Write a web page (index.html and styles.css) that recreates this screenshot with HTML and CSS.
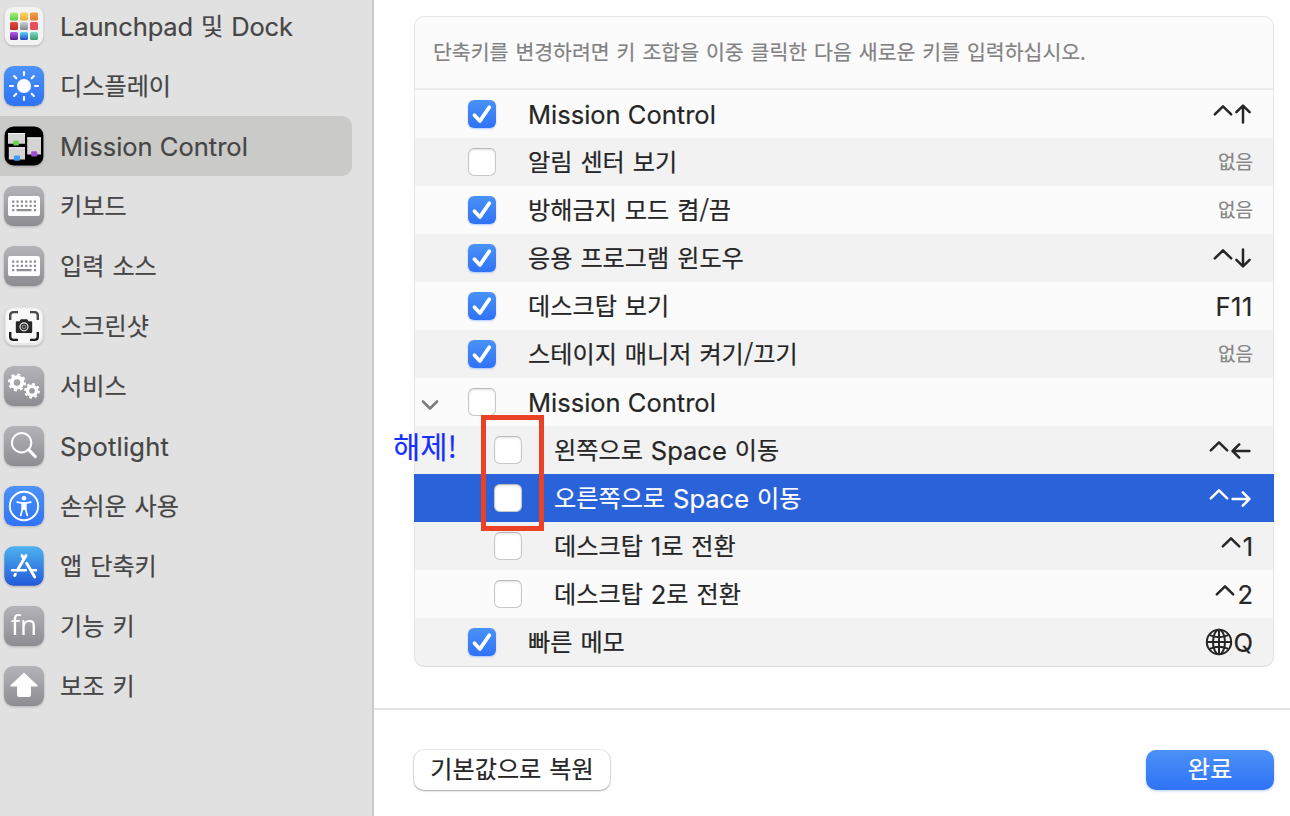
FILE: index.html
```
<!DOCTYPE html>
<html lang="ko">
<head>
  <meta charset="UTF-8">
  <title>키보드 단축키</title>
  <link rel="stylesheet" href="styles.css">
</head>
<body>
  <svg width="0" height="0" class="defs">
    <defs>
      <linearGradient id="g-blue" x1="0" y1="0" x2="0" y2="1"><stop offset="0" stop-color="#4b92f8"/><stop offset="1" stop-color="#2f73f6"/></linearGradient>
      <linearGradient id="g-gray" x1="0" y1="0" x2="0" y2="1"><stop offset="0" stop-color="#b3b3b8"/><stop offset="1" stop-color="#8c8c91"/></linearGradient>
      <linearGradient id="g-store" x1="0" y1="0" x2="0" y2="1"><stop offset="0" stop-color="#4db2ef"/><stop offset="1" stop-color="#2359d8"/></linearGradient>
      <linearGradient id="l1" x1="0" y1="0" x2="0" y2="1"><stop offset="0" stop-color="#a9f07a"/><stop offset="1" stop-color="#56cc4b"/></linearGradient>
      <linearGradient id="l2" x1="0" y1="0" x2="0" y2="1"><stop offset="0" stop-color="#f8d75c"/><stop offset="1" stop-color="#eeab3a"/></linearGradient>
      <linearGradient id="l3" x1="0" y1="0" x2="0" y2="1"><stop offset="0" stop-color="#f0a04a"/><stop offset="1" stop-color="#dd7b2b"/></linearGradient>
      <linearGradient id="l4" x1="0" y1="0" x2="0" y2="1"><stop offset="0" stop-color="#e74b40"/><stop offset="1" stop-color="#b92c24"/></linearGradient>
      <linearGradient id="l5" x1="0" y1="0" x2="0" y2="1"><stop offset="0" stop-color="#c9d3d6"/><stop offset="1" stop-color="#7f8688"/></linearGradient>
      <linearGradient id="l7" x1="0" y1="0" x2="0" y2="1"><stop offset="0" stop-color="#b75bea"/><stop offset="1" stop-color="#541a8c"/></linearGradient>
      <linearGradient id="l8" x1="0" y1="0" x2="0" y2="1"><stop offset="0" stop-color="#5bd3fa"/><stop offset="1" stop-color="#2046c4"/></linearGradient>
      <linearGradient id="l9" x1="0" y1="0" x2="0" y2="1"><stop offset="0" stop-color="#7fdcc8"/><stop offset="1" stop-color="#3d9a6c"/></linearGradient>
      <symbol id="keyboard" viewBox="0 0 40 40">
        <rect width="40" height="40" rx="9" fill="url(#g-gray)"/>
        <rect x="4" y="10" width="32" height="20" rx="2.6" fill="#fff"/>
        <path d="M8.1 15.6h24.2M8.1 19.9h24.2" stroke="#8e8e93" stroke-width="2.2" stroke-dasharray="2.2 2.15"/>
        <path d="M8.1 24.2h2.2M12.5 24.2h15M29.9 24.2h2.2" stroke="#8e8e93" stroke-width="2.2"/>
      </symbol>
      <symbol id="check" viewBox="0 0 28 28"><path d="M6.5 15.2 11.9 21 21.3 7.2" fill="none" stroke="#fff" stroke-width="3.8" stroke-linecap="round" stroke-linejoin="round"/></symbol>
      <symbol id="ctrl" viewBox="0 0 20 24"><path d="M1.8 12.4 10 4.4 18.2 12.4" fill="none" stroke="currentColor" stroke-width="2.5" stroke-linecap="round" stroke-linejoin="round"/></symbol>
      <symbol id="arrow-v" viewBox="0 0 16 20"><path d="M8 18.6V2M1.4 8.2 8 1.6 14.6 8.2" fill="none" stroke="currentColor" stroke-width="2.5" stroke-linecap="round" stroke-linejoin="round"/></symbol>
      <symbol id="arrow-h" viewBox="0 0 20 16"><path d="M18.4 8H2M8.2 1.4 1.6 8 8.2 14.6" fill="none" stroke="currentColor" stroke-width="2.5" stroke-linecap="round" stroke-linejoin="round"/></symbol>
    </defs>
  </svg>

  <div class="window">
    <nav class="sidebar">
      <div class="item">
        <svg class="icon" viewBox="0 0 40 40">
          <rect x=".7" y=".7" width="38.6" height="38.6" rx="9" fill="#f3f3f3"/>
          <rect x="6" y="6.5" width="8" height="8" rx="1.6" fill="url(#l1)"/><rect x="16" y="6.5" width="8" height="8" rx="1.6" fill="url(#l2)"/><rect x="26" y="6.5" width="8" height="8" rx="1.6" fill="url(#l3)"/>
          <rect x="6" y="16" width="8" height="8" rx="1.6" fill="url(#l4)"/><rect x="16" y="16" width="8" height="8" rx="1.6" fill="url(#l5)"/><rect x="26" y="16" width="8" height="8" rx="1.6" fill="#ea4d5e"/>
          <rect x="6" y="26" width="8" height="8" rx="1.6" fill="url(#l7)"/><rect x="16" y="26" width="8" height="8" rx="1.6" fill="url(#l8)"/><rect x="26" y="26" width="8" height="8" rx="1.6" fill="url(#l9)"/>
        </svg>
        <span class="label"><span class="en tight">Launchpad</span> 및 <span class="en tight">Dock</span></span>
      </div>
      <div class="item">
        <svg class="icon" viewBox="0 0 40 40">
          <rect width="40" height="40" rx="9" fill="url(#g-blue)"/>
          <circle cx="20" cy="20" r="7" fill="#fff"/>
          <path d="M20 6v3M20 31v3M6 20h3M31 20h3M10.1 10.1l2.2 2.2M27.7 27.7l2.2 2.2M10.1 29.9l2.2-2.2M27.7 12.3l2.2-2.2" stroke="#fff" stroke-width="2.1" stroke-linecap="round"/>
        </svg>
        <span class="label">디스플레이</span>
      </div>
      <div class="item selected">
        <svg class="icon" viewBox="0 0 40 40">
          <rect x=".6" y=".4" width="38.8" height="39" rx="9" fill="#000"/>
          <path d="M4 7h17v10.8H4zM4.8 21.3H21v12.2H4.8zM23.2 11.4h13.8v17H23.200z" fill="#d4d4d4"/>
          <path d="M4 7.5h17M4.8 21.8H21M23.200 11.900h13.800" stroke="#f6f6f6"/>
          <rect x="9.3" y="14.500" width="5.600" height="5" rx="1" fill="#67d352"/>
          <rect x="10" y="29.500" width="6" height="5.200" rx="1" fill="#3d9cf3"/>
          <rect x="27.200" y="25.200" width="6" height="5.200" rx="1" fill="#9c4fd6"/>
        </svg>
        <span class="label"><span class="en">Mission Control</span></span>
      </div>
      <div class="item">
        <svg class="icon"><use href="#keyboard"/></svg>
        <span class="label">키보드</span>
      </div>
      <div class="item">
        <svg class="icon"><use href="#keyboard"/></svg>
        <span class="label">입력 소스</span>
      </div>
      <div class="item">
        <svg class="icon" viewBox="0 0 40 40">
          <rect x=".7" y="1" width="38.6" height="38.4" rx="9" fill="#e9e9e9"/>
          <rect x="2.2" y="2.4" width="35.6" height="34.6" rx="7.5" fill="#f8f8f8"/>
          <path d="M6.2 14V9.5q0-3.4 3.4-3.4H14M26 6.1h4.4q3.4 0 3.4 3.4V14" fill="none" stroke="#4a4a4a" stroke-width="2.4"/>
          <path d="M33.800 26v4.500q0 3.400-3.400 3.400H26M14 33.900H9.600q-3.400 0-3.400-3.400V26" fill="none" stroke="#1c1c1c" stroke-width="2.4"/>
          <path d="M13 15.200h2.500l1.300-2h6.400l1.300 2H27q1.200 0 1.200 1.200v9.400q0 1.200-1.200 1.200H13q-1.200 0-1.200-1.200v-9.400q0-1.200 1.200-1.200z" fill="#262626"/>
          <circle cx="20" cy="20.800" r="4" fill="#333" stroke="#e6e6e6" stroke-width="1.200"/>
          <circle cx="20" cy="20.800" r="1.800" fill="none" stroke="#aaa" stroke-width=".9"/>
        </svg>
        <span class="label">스크린샷</span>
      </div>
      <div class="item">
        <svg class="icon" viewBox="0 0 40 40">
          <rect width="40" height="40" rx="9" fill="url(#g-gray)"/>
          <g fill="none" stroke="#fff">
            <circle cx="13" cy="16.400" r="5.200" stroke-width="3.900"/>
            <circle cx="13" cy="16.400" r="7.900" stroke-width="2.200" stroke-dasharray="3.100 3.105"/>
            <circle cx="28" cy="24.800" r="4.500" stroke-width="3.400"/>
            <circle cx="28" cy="24.800" r="6.900" stroke-width="2" stroke-dasharray="2.700 2.719"/>
          </g>
        </svg>
        <span class="label">서비스</span>
      </div>
      <div class="item">
        <svg class="icon" viewBox="0 0 40 40">
          <rect width="40" height="40" rx="9" fill="url(#g-gray)"/>
          <circle cx="17.600" cy="16.700" r="9.700" fill="none" stroke="#fff" stroke-width="2"/>
          <path d="M24.800 23.900l6.500 6.700" stroke="#fff" stroke-width="3" stroke-linecap="round"/>
        </svg>
        <span class="label"><span class="en loose">Spotlight</span></span>
      </div>
      <div class="item">
        <svg class="icon" viewBox="0 0 40 40">
          <rect width="40" height="40" rx="9" fill="url(#g-blue)"/>
          <circle cx="20" cy="20" r="14.200" fill="none" stroke="#fff" stroke-width="1.900"/>
          <circle cx="20" cy="12.300" r="2.300" fill="#fff"/>
          <path d="M13.200 16.200l5 .9h3.600l5-.9M18.300 23.500l-1.600 6M21.700 23.500l1.600 6" fill="none" stroke="#fff" stroke-width="1.700" stroke-linecap="round"/>
          <path d="M17.400 16.300h5.200l.2 8.500-2-.9h-1.600l-2 .9z" fill="#fff"/>
        </svg>
        <span class="label">손쉬운 사용</span>
      </div>
      <div class="item">
        <svg class="icon" viewBox="0 0 40 40">
          <rect x=".3" y=".3" width="39.400" height="39.400" rx="9" fill="url(#g-store)"/>
          <g fill="none" stroke="#fff" stroke-width="2.900" stroke-linecap="round">
            <path d="M22 9.400 13.400 24.200M17.900 9.400l1.600 2.800M22.700 17.300l8 13.600M10.700 29.500l.7-1.200"/>
            <path d="M8 24.300h13.800M28.500 24.300H32" stroke-width="2.600"/>
          </g>
        </svg>
        <span class="label">앱 단축키</span>
      </div>
      <div class="item">
        <div class="icon fn">fn</div>
        <span class="label">기능 키</span>
      </div>
      <div class="item">
        <svg class="icon" viewBox="0 0 40 40">
          <rect width="40" height="40" rx="9" fill="url(#g-gray)"/>
          <path d="M20 7.600 33 19.700H26.200V29q0 1.200-1.200 1.200H15q-1.200 0-1.200-1.200V19.700H7z" fill="#fff" stroke="#fff" stroke-width="1.400" stroke-linejoin="round"/>
        </svg>
        <span class="label">보조 키</span>
      </div>
    </nav>

    <main class="content">
      <section class="shortcuts">
        <div class="panel">
          <p class="hint">단축키를 변경하려면 키 조합을 이중 클릭한 다음 새로운 키를 입력하십시오.</p>
          <div class="row">
            <span class="checkbox on"><svg><use href="#check"/></svg></span>
            <span class="name"><span class="en">Mission Control</span></span>
            <span class="keys"><svg class="ctrl"><use href="#ctrl"/></svg><svg class="up"><use href="#arrow-v"/></svg></span>
          </div>
          <div class="row">
            <span class="checkbox"></span>
            <span class="name">알림 센터 보기</span>
            <span class="keys none">없음</span>
          </div>
          <div class="row">
            <span class="checkbox on"><svg><use href="#check"/></svg></span>
            <span class="name">방해금지 모드 켬/끔</span>
            <span class="keys none">없음</span>
          </div>
          <div class="row">
            <span class="checkbox on"><svg><use href="#check"/></svg></span>
            <span class="name">응용 프로그램 윈도우</span>
            <span class="keys"><svg class="ctrl"><use href="#ctrl"/></svg><svg class="down"><use href="#arrow-v"/></svg></span>
          </div>
          <div class="row">
            <span class="checkbox on"><svg><use href="#check"/></svg></span>
            <span class="name">데스크탑 보기</span>
            <span class="keys text">F11</span>
          </div>
          <div class="row">
            <span class="checkbox on"><svg><use href="#check"/></svg></span>
            <span class="name">스테이지 매니저 켜기/끄기</span>
            <span class="keys none">없음</span>
          </div>
          <div class="row group">
            <svg class="chevron" viewBox="0 0 18 12"><path d="M2 2.500 9 9.500 16 2.500" fill="none" stroke="#7d7d7d" stroke-width="2.600" stroke-linecap="round" stroke-linejoin="round"/></svg>
            <span class="checkbox"></span>
            <span class="name"><span class="en">Mission Control</span></span>
          </div>
          <div class="row child">
            <span class="checkbox"></span>
            <span class="name">왼쪽으로 <span class="en">Space</span> 이동</span>
            <span class="keys"><svg class="ctrl"><use href="#ctrl"/></svg><svg class="left"><use href="#arrow-h"/></svg></span>
          </div>
          <div class="row child active">
            <span class="checkbox"></span>
            <span class="name">오른쪽으로 <span class="en">Space</span> 이동</span>
            <span class="keys"><svg class="ctrl"><use href="#ctrl"/></svg><svg class="right"><use href="#arrow-h"/></svg></span>
          </div>
          <div class="row child">
            <span class="checkbox"></span>
            <span class="name">데스크탑 <span class="en">1</span>로 전환</span>
            <span class="keys"><svg class="ctrl"><use href="#ctrl"/></svg><span class="digit">1</span></span>
          </div>
          <div class="row child">
            <span class="checkbox"></span>
            <span class="name">데스크탑 <span class="en">2</span>로 전환</span>
            <span class="keys"><svg class="ctrl"><use href="#ctrl"/></svg><span class="digit">2</span></span>
          </div>
          <div class="row">
            <span class="checkbox on"><svg><use href="#check"/></svg></span>
            <span class="name">빠른 메모</span>
            <span class="keys">
              <svg class="globe" viewBox="0 0 28 28" fill="none" stroke="currentColor" stroke-width="2"><circle cx="14" cy="14" r="12.200"/><ellipse cx="14" cy="14" rx="6" ry="12.200"/><path d="M14 2v24M2 14h24M4.800 7.200q9.200 4 18.400 0M4.800 20.800q9.200-4 18.400 0"/></svg>
              <span class="digit">Q</span>
            </span>
          </div>
        </div>
      </section>
      <footer class="footer">
        <button class="btn restore">기본값으로 복원</button>
        <button class="btn done">완료</button>
      </footer>
    </main>

    <div class="mark"></div>
    <div class="note">해제!</div>
  </div>
</body>
</html>
```
FILE: styles.css
```
* {
  box-sizing: border-box;
}

body {
  margin: 0;
  background: #fff;
  color: #262626;
  font-family: 'Noto Sans CJK KR', sans-serif;
  font-size: 24.15px;
  word-spacing: 1.2px;
  -webkit-text-stroke: 0.2px;
}

.defs {
  position: absolute;
}

.window {
  position: relative;
  display: flex;
  width: 1290px;
  height: 816px;
  overflow: hidden;
}

.en {
  font-family: Inter, sans-serif;
  font-size: 25.5px;
  line-height: 1;
  word-spacing: 0;
  vertical-align: -1px;
}

.tight {
  letter-spacing: -0.15px;
}

.loose {
  letter-spacing: 0.22px;
}

/* Sidebar */
.sidebar {
  width: 374px;
  height: 820px;
  margin-top: -4px;
  background: #e1e1e1;
  border-right: 2px solid #c9c9c9;
  color: #464646;
}

.item {
  display: flex;
  align-items: center;
  gap: 16px;
  width: 352px;
  height: 60px;
  padding-left: 4px;
}

.item.selected {
  background: #cacac8;
  border-radius: 0 10px 10px 0;
}

.icon {
  width: 40px;
  height: 40px;
  flex: none;
  border-radius: 9px;
  filter: drop-shadow(0 1px 1px rgba(0, 0, 0, 0.22));
}

.fn {
  background: linear-gradient(#b3b3b8, #8c8c91);
  color: #fff;
  font: 400 28px/37px 'Open Sans', sans-serif;
  -webkit-text-stroke: 0;
  text-align: center;
}

.label {
  padding-bottom: 2px;
  line-height: 58px;
  white-space: nowrap;
}

/* Shortcut list */
.content {
  flex: 1;
  display: flex;
  flex-direction: column;
}

.shortcuts {
  height: 710px;
  padding: 16px 16px 0 40px;
  border-bottom: 2px solid #e4e4e4;
}

.panel {
  height: 651px;
  border-radius: 10px;
  background: #fbfbfb;
  box-shadow: inset 0 0 0 1px #e6e6e6;
  overflow: hidden;
}

.hint {
  height: 74px;
  margin: 0;
  padding-left: 19px;
  border-bottom: 2px solid #ebebeb;
  color: #828282;
  font-size: 20.5px;
  line-height: 70px;
  white-space: nowrap;
}

.row {
  display: flex;
  align-items: center;
  height: 48px;
  padding: 0 20px 0 53px;
  border: solid #e6e6e6;
  border-width: 0 1px;
}

.row:nth-child(odd) {
  background: #f2f2f2;
}

.row:last-child {
  border-bottom: 1px solid #dadada;
  border-radius: 0 0 10px 10px;
  height: 49px;
}

.row.child {
  padding-left: 79px;
}

.row.group {
  padding-left: 6px;
}

.row.active {
  background: #2962d9;
  border-color: #2962d9;
  color: #fff;
}

.chevron {
  width: 18px;
  height: 12px;
  margin: 5px 29px 0 0;
}

.checkbox {
  width: 28px;
  height: 28px;
  flex: none;
  border: 1px solid #c8c8c8;
  border-top-color: #b9b9b9;
  border-radius: 6px;
  background: #fff;
  box-shadow: inset 0 1px 2px rgba(0, 0, 0, 0.12);
}

.checkbox.on {
  border: 0;
  background: linear-gradient(#4a91f8, #2f73f6);
  box-shadow: 0 1px 2px rgba(47, 115, 246, 0.35);
}

.checkbox svg {
  display: block;
  width: 28px;
  height: 28px;
}

.name {
  flex: 1;
  margin-left: 32px;
  padding-bottom: 2px;
  line-height: 46px;
  white-space: nowrap;
}

.keys {
  display: flex;
  align-items: center;
  gap: 2px;
  font-family: Inter, sans-serif;
  font-size: 25.5px;
  line-height: 46px;
}

.text {
  padding-top: 2px;
  letter-spacing: 0.6px;
}

.digit {
  padding-top: 2px;
}

.none {
  padding-bottom: 2px;
  color: #868686;
  font-family: 'Noto Sans CJK KR', sans-serif;
  font-size: 19px;
}

.ctrl {
  width: 20px;
  height: 24px;
}

.up, .down {
  width: 16px;
  height: 20px;
  margin-right: 2px;
}

.down {
  transform: rotate(180deg);
}

.left, .right {
  width: 20px;
  height: 16px;
  margin: 1px 2px 0 0;
}

.right {
  transform: rotate(180deg);
}

.globe {
  width: 28px;
  height: 28px;
  margin-right: -1px;
}

/* Footer buttons */
.footer {
  display: flex;
  justify-content: space-between;
  padding: 40px 16px 0 40px;
}

.btn {
  height: 40px;
  padding: 0 0 5px;
  border: 0;
  border-radius: 10px;
  font: 24.15px/35px 'Noto Sans CJK KR', sans-serif;
  word-spacing: 1.2px;
}

.restore {
  width: 196px;
  background: #fff;
  color: #262626;
  box-shadow: 0 0 0 1px rgba(0, 0, 0, 0.07), 0 1px 2px rgba(0, 0, 0, 0.3);
}

.done {
  width: 128px;
  background: linear-gradient(#4a91f8, #2f73f6);
  color: #fff;
  box-shadow: 0 1px 3px rgba(47, 115, 246, 0.35);
}

/* Annotations over the list */
.mark {
  position: absolute;
  left: 481px;
  top: 415px;
  width: 63px;
  height: 116px;
  border: 5px solid #eb4127;
}

.note {
  position: absolute;
  left: 393px;
  top: 424px;
  color: #1531ff;
  font-size: 29.6px;
  line-height: 44px;
}
```
